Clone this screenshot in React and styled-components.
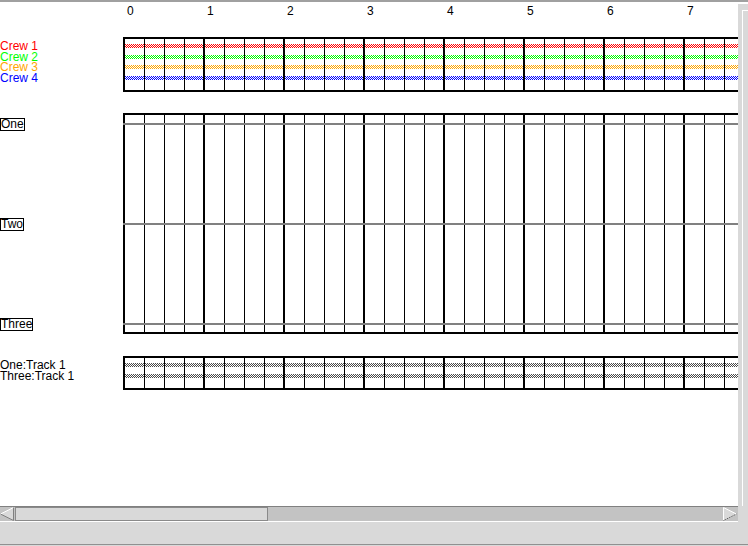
import React from "react";
import styled, { createGlobalStyle } from "styled-components";

const GlobalStyle = createGlobalStyle`
  html, body { margin: 0; padding: 0; background: #fff; }
  body { font-family: "Liberation Sans", Arial, sans-serif; font-size: 12px; color: #000; }
`;

const Frame = styled.div`
  width: 748px;
  height: 546px;
  box-sizing: border-box;
  border-top: 2px solid #a0a0a0;
  background: #d9d9d9;
  display: flex;
  flex-direction: column;
  overflow: hidden;
`;

const MainRow = styled.div`
  display: flex;
  height: 504px;
  flex: none;
`;

const Canvas = styled.div`
  width: 738px;
  flex: none;
  background: #fff;
  display: flex;
  flex-direction: column;
  overflow: hidden;
`;

const VScroll = styled.div`
  flex: 1;
  background: #fff;
  padding-top: 2px;
  display: flex;
`;

const VTrough = styled.div`
  flex: 1;
  background: #d9d9d9;
  padding: 6px 0 0 4px;
  display: flex;
`;

const VThumb = styled.div`
  flex: 1;
  border-top: 1px solid #fff;
  border-left: 1px solid #fff;
`;

const Ruler = styled.div`
  display: flex;
  height: 35px;
  flex: none;
  box-sizing: border-box;
  padding: 2px 0 0 123px;
  line-height: 14px;
`;

const Tick = styled.div`
  width: 80px;
  flex: none;
  box-sizing: border-box;
  padding-left: 4px;
`;

const Section = styled.div`
  display: flex;
  flex: none;
  margin-top: ${(p) => p.$gap}px;
`;

const LabelCol = styled.div`
  width: 123px;
  flex: none;
  box-sizing: border-box;
  display: flex;
  flex-direction: column;
  align-items: flex-start;
  padding-top: ${(p) => p.$pad}px;
  gap: ${(p) => p.$gap || 0}px;
`;

const LaneLabel = styled.div`
  height: ${(p) => p.$h}px;
  line-height: ${(p) => p.$h}px;
  color: ${(p) => p.$color || "#000"};
  white-space: nowrap;
`;

const BoxLabel = styled.div`
  border: 1px solid #000;
  height: 11px;
  line-height: 11px;
  white-space: nowrap;
`;

const Chart = styled.div`
  flex: 1;
  position: relative;
  box-sizing: border-box;
  height: ${(p) => p.$h}px;
  border-top: 2px solid #000;
  border-bottom: 2px solid #000;
  display: flex;
  flex-direction: column;
  padding-top: ${(p) => p.$pad}px;

  &::after {
    content: "";
    position: absolute;
    left: 0;
    right: 0;
    top: -2px;
    bottom: -2px;
    pointer-events: none;
    z-index: 1;
    background-image:
      repeating-linear-gradient(to right, #000 0 2px, transparent 2px 80px),
      repeating-linear-gradient(to right, transparent 0 1px, #000 1px 2px, transparent 2px 20px);
  }
`;

const Lane = styled.div`
  height: ${(p) => p.$h}px;
  flex: none;
  display: flex;
  flex-direction: column;
  padding-top: 3px;
  box-sizing: border-box;
`;

const DotRow = styled.div`
  height: 1px;
  flex: none;
  background-image: repeating-linear-gradient(
    to right,
    ${(p) => p.$color} 0 1px,
    #fff 1px 2px
  );
  background-position: ${(p) => (p.$odd ? "1px" : "0px")} 0;
`;

const GuideLine = styled.div`
  height: 2px;
  flex: none;
  background: #808080;
  position: relative;
  z-index: 2;
  margin-top: ${(p) => p.$mt || 0}px;
`;

const HRow = styled.div`
  display: flex;
  height: 16px;
  flex: none;
`;

const HScroll = styled.div`
  width: 738px;
  flex: none;
  box-sizing: border-box;
  border-top: 1px solid #808080;
  border-bottom: 1px solid #fff;
  background: #c3c3c3;
  display: flex;
  align-items: stretch;
`;

const ArrowBox = styled.div`
  width: 14px;
  flex: none;
  display: flex;
  margin-right: ${(p) => p.$mr || 0}px;
`;

const HThumb = styled.div`
  width: 253px;
  flex: none;
  margin-left: 1px;
  box-sizing: border-box;
  background: #d9d9d9;
  border: 1px solid #8a8a8a;
`;

const Spacer = styled.div`
  flex: 1;
`;

const BottomPanel = styled.div`
  height: 22px;
  flex: none;
  background: #d9d9d9;
  border-bottom: 1px solid #909090;
`;

const Stripe = ({ color }) => (
  <>
    {[0, 1, 2, 3].map((r) => (
      <DotRow key={r} $color={color} $odd={r % 2 === 1} />
    ))}
  </>
);

const LeftArrow = () => (
  <ArrowBox>
    <svg width="14" height="14" viewBox="0 0 14 14">
      <polygon points="13.5,0.5 13.5,13.5 0.5,7" fill="#d9d9d9" />
      <line x1="13.5" y1="0.5" x2="0.5" y2="7" stroke="#fff" strokeWidth="1" />
      <line x1="0.5" y1="7" x2="13.5" y2="13.5" stroke="#808080" strokeWidth="1" />
      <line x1="13.5" y1="0.5" x2="13.5" y2="13.5" stroke="#808080" strokeWidth="1" />
    </svg>
  </ArrowBox>
);

const RightArrow = () => (
  <ArrowBox $mr={1}>
    <svg width="14" height="14" viewBox="0 0 14 14">
      <polygon points="0.5,0.5 0.5,13.5 13.5,7" fill="#d9d9d9" />
      <line x1="0.5" y1="0.5" x2="0.5" y2="13.5" stroke="#fff" strokeWidth="1" />
      <line x1="0.5" y1="0.5" x2="13.5" y2="7" stroke="#fff" strokeWidth="1" />
      <line x1="0.5" y1="13.5" x2="13.5" y2="7" stroke="#555" strokeWidth="1" strokeDasharray="1 1" />
    </svg>
  </ArrowBox>
);

const crews = [
  { name: "Crew 1", color: "#ff0000", h: 11 },
  { name: "Crew 2", color: "#00ff00", h: 10 },
  { name: "Crew 3", color: "#ffa500", h: 11 },
  { name: "Crew 4", color: "#0000ff", h: 11 },
];

const tracks = [
  { name: "One:Track 1", h: 11 },
  { name: "Three:Track 1", h: 11 },
];
const stations = ["One", "Two", "Three"];
const ticks = [0, 1, 2, 3, 4, 5, 6, 7];

export default function App() {
  return (
    <>
      <GlobalStyle />
      <Frame>
        <MainRow>
          <Canvas>
            <Ruler>
              {ticks.map((t) => (
                <Tick key={t}>{t}</Tick>
              ))}
            </Ruler>

            <Section $gap={0}>
              <LabelCol $pad={4}>
                {crews.map((c) => (
                  <LaneLabel key={c.name} $h={c.h} $color={c.color}>
                    {c.name}
                  </LaneLabel>
                ))}
              </LabelCol>
              <Chart $h={55} $pad={2}>
                {crews.map((c) => (
                  <Lane key={c.name} $h={c.h}>
                    <Stripe color={c.color} />
                  </Lane>
                ))}
              </Chart>
            </Section>

            <Section $gap={21}>
              <LabelCol $pad={5} $gap={87}>
                {stations.map((s) => (
                  <BoxLabel key={s}>{s}</BoxLabel>
                ))}
              </LabelCol>
              <Chart $h={221} $pad={8}>
                <GuideLine />
                <GuideLine $mt={98} />
                <GuideLine $mt={98} />
              </Chart>
            </Section>

            <Section $gap={22}>
              <LabelCol $pad={4}>
                {tracks.map((t) => (
                  <LaneLabel key={t.name} $h={t.h}>
                    {t.name}
                  </LaneLabel>
                ))}
              </LabelCol>
              <Chart $h={34} $pad={2}>
                {tracks.map((t) => (
                  <Lane key={t.name} $h={t.h}>
                    <Stripe color="#4a4a4a" />
                  </Lane>
                ))}
              </Chart>
            </Section>
          </Canvas>
          <VScroll>
            <VTrough>
              <VThumb />
            </VTrough>
          </VScroll>
        </MainRow>
        <HRow>
          <HScroll>
            <LeftArrow />
            <HThumb />
            <Spacer />
            <RightArrow />
          </HScroll>
        </HRow>
        <BottomPanel />
      </Frame>
    </>
  );
}
